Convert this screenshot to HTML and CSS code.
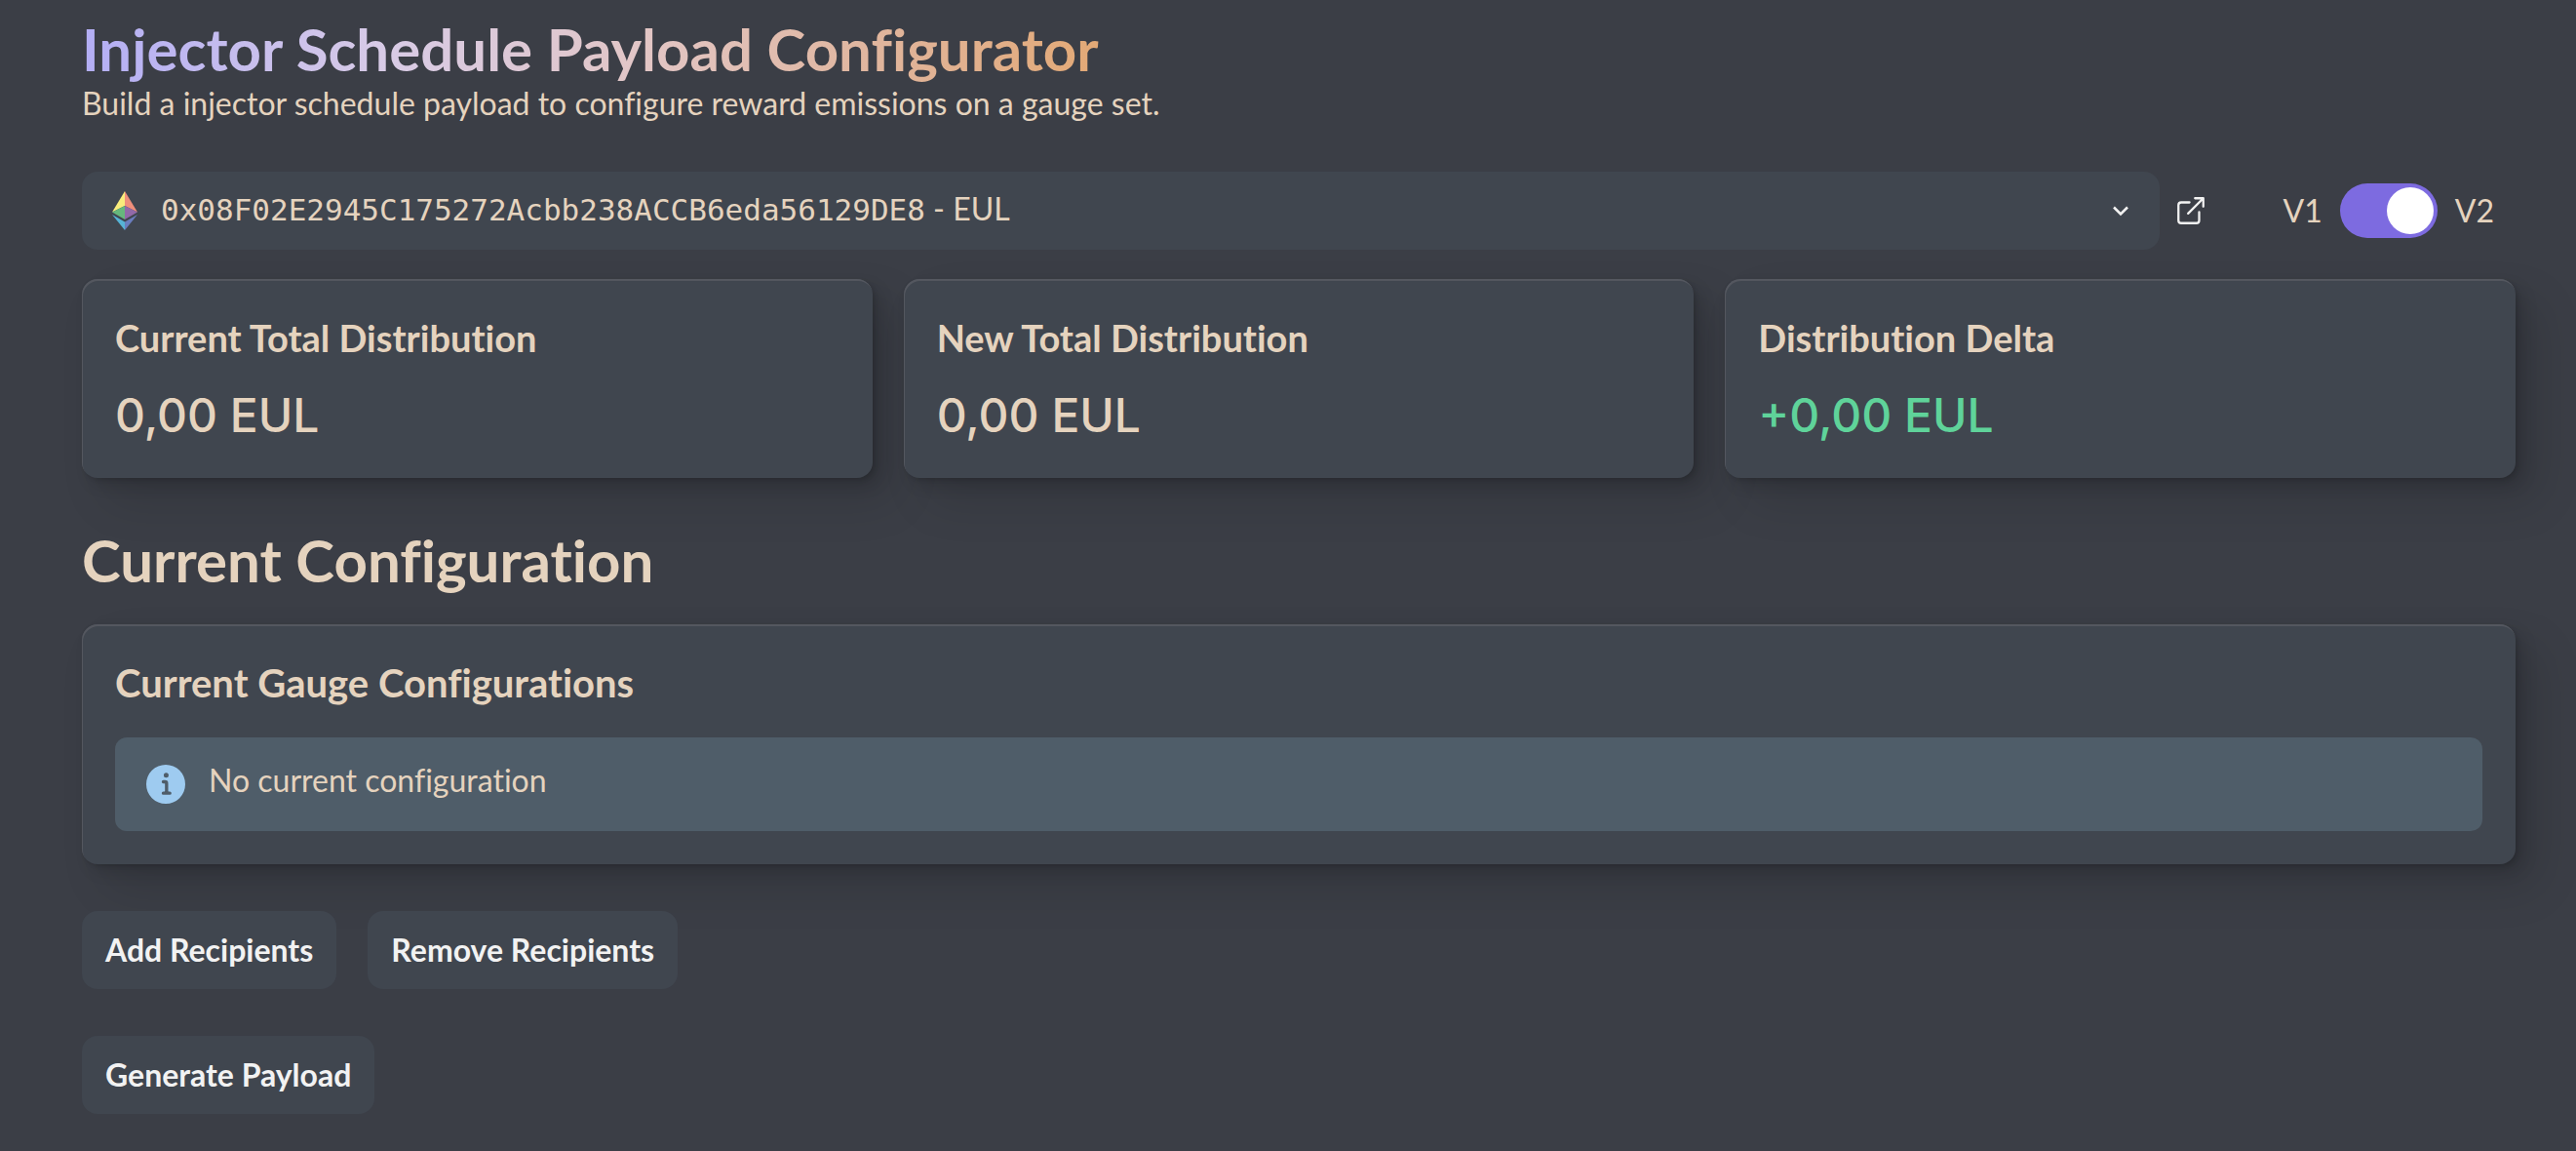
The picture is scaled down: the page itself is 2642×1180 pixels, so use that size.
FILE: index.html
```html
<!DOCTYPE html>
<html lang="en">
<head>
<meta charset="utf-8">
<meta name="viewport" content="width=device-width, initial-scale=1">
<title>Injector Schedule Payload Configurator</title>
<link rel="stylesheet" href="styles.css">
</head>
<body>
<main class="page">
  <header class="page-header">
    <h1 class="heading heading-gradient">Injector Schedule Payload Configurator</h1>
    <p class="subtitle">Build a injector schedule payload to configure reward emissions on a gauge set.</p>
  </header>

  <div class="toolbar">
    <div class="picker">
      <svg class="picker-logo" viewBox="0 0 26 40" aria-hidden="true">
        <path fill="#f9ec7c" d="M13 0 0 21.500 13 15z"/>
        <path fill="#ef8f7b" d="M13 0v15l13 6.500z"/>
        <path fill="#66b87c" d="M0 21.500 13 15v14z"/>
        <path fill="#9169a8" d="M26 21.500 13 15v14z"/>
        <path fill="#56b3d6" d="M0 24l13 7.500V40z"/>
        <path fill="#6a7dbe" d="M26 24l-13 7.500V40z"/>
      </svg>
      <span class="picker-text" aria-hidden="true"><span class="mono">0x08F02E2945C175272Acbb238ACCB6eda56129DE8</span> - EUL</span>
      <svg class="picker-chevron" viewBox="0 0 24 24" aria-hidden="true"><path d="m5 8.500 7 7 7-7"/></svg>
      <select class="picker-select" aria-label="Injector address">
        <option selected>0x08F02E2945C175272Acbb238ACCB6eda56129DE8 - EUL</option>
      </select>
    </div>
    <a class="explorer-link" href="#" aria-label="Open in explorer">
      <svg viewBox="0 0 24 24" aria-hidden="true"><path d="M18 13v6a2 2 0 0 1-2 2H5a2 2 0 0 1-2-2V8a2 2 0 0 1 2-2h6M15 3h6v6M10 14 21 3"/></svg>
    </a>
    <div class="version">
      <label for="version">V1</label>
      <input class="switch" id="version" type="checkbox" role="switch" checked>
      <label for="version">V2</label>
    </div>
  </div>

  <section class="stats">
    <div class="card">
      <h2 class="stat-label">Current Total Distribution</h2>
      <p class="stat-value">0,00 EUL</p>
    </div>
    <div class="card">
      <h2 class="stat-label">New Total Distribution</h2>
      <p class="stat-value">0,00 EUL</p>
    </div>
    <div class="card">
      <h2 class="stat-label">Distribution Delta</h2>
      <p class="stat-value positive">+0,00 EUL</p>
    </div>
  </section>

  <section class="configuration">
    <h2 class="heading">Current Configuration</h2>
    <div class="card">
      <h3 class="card-title">Current Gauge Configurations</h3>
      <div class="alert" role="status">
        <svg class="alert-icon" viewBox="0 0 24 24" aria-hidden="true"><path d="M12 0a12 12 0 1 0 0 24 12 12 0 0 0 0-24zm.250 5a1.500 1.500 0 1 1 0 3 1.500 1.500 0 0 1 0-3zm2.250 13.500h-4a1 1 0 0 1 0-2h.750a.250.250 0 0 0 .250-.250v-4.500a.250.250 0 0 0-.250-.250h-.750a1 1 0 0 1 0-2h1a2 2 0 0 1 2 2v4.750a.250.250 0 0 0 .250.250h.750a1 1 0 0 1 0 2z"/></svg>
        <span>No current configuration</span>
      </div>
    </div>
  </section>

  <div class="actions">
    <button class="button" type="button">Add Recipients</button>
    <button class="button" type="button">Remove Recipients</button>
  </div>
  <div class="actions">
    <button class="button" type="button">Generate Payload</button>
  </div>
</main>
</body>
</html>
```
FILE: styles.css
```css
:root {
  --page: #3b3e46;
  --surface: #40464f;
  --sand: #e5d3be;
  --light: #f2f2f2;
  --green: #5fd39a;
  --purple: #7d6be0;
}

* {
  box-sizing: border-box;
  margin: 0;
}

body {
  background: var(--page);
  color: var(--sand);
  font: 400 32px/40px Lato, "Liberation Sans", sans-serif;
  font-variant-ligatures: none;
}

.page {
  padding: 14px 62px 38px 84px;
}

.heading {
  width: fit-content;
  font-size: 60px;
  font-weight: 700;
  line-height: 72px;
}

.heading-gradient {
  background: linear-gradient(90deg, #b3aef5 0%, #d8cbe6 30%, #e2c6c6 55%, #e0b49a 80%, #e3a976 100%);
  background-clip: text;
  -webkit-background-clip: text;
  color: transparent;
}

.toolbar {
  display: flex;
  align-items: center;
  margin-top: 50px;
}

.picker {
  position: relative;
  display: flex;
  flex: 1;
  align-items: center;
  gap: 24px;
  height: 80px;
  padding: 0 28px 0 31px;
  border-radius: 16px;
  background: var(--surface);
}

.picker-logo {
  width: 26px;
  height: 40px;
}

.picker-text {
  flex: 1;
  padding-bottom: 4px;
}

.mono {
  font-family: "DejaVu Sans Mono", "Liberation Mono", monospace;
  font-size: 31px;
  line-height: 32px;
}

.picker-chevron {
  width: 24px;
  height: 24px;
  fill: none;
  stroke: var(--light);
  stroke-width: 2.5;
}

.picker-select {
  position: absolute;
  inset: 0;
  width: 100%;
  height: 100%;
  opacity: 0;
  cursor: pointer;
}

.explorer-link {
  margin-left: 15px;
}

.explorer-link svg {
  display: block;
  width: 34px;
  height: 34px;
  fill: none;
  stroke: var(--light);
  stroke-width: 1.6;
  stroke-linecap: round;
  stroke-linejoin: round;
}

.version {
  display: flex;
  align-items: center;
  gap: 18px;
  padding: 0 22px 0 78px;
}

.switch {
  appearance: none;
  width: 100px;
  height: 56px;
  padding: 4px;
  border-radius: 28px;
  background: #6a6d75;
  cursor: pointer;
}

.switch::before {
  content: "";
  display: block;
  width: 48px;
  height: 48px;
  border-radius: 50%;
  background: #fff;
}

.switch:checked {
  background: var(--purple);
}

.switch:checked::before {
  margin-left: auto;
}

.stats {
  display: grid;
  grid-template-columns: repeat(3, 1fr);
  gap: 32px;
  margin-top: 30px;
}

.card {
  padding: 36px 34px 34px;
  border-radius: 16px;
  background: var(--surface);
  box-shadow:
    inset 1px 2px 0 #54575f,
    2px 2px 4px rgba(0, 0, 0, 0.12),
    8px 8px 16px rgba(0, 0, 0, 0.12),
    24px 24px 48px rgba(0, 0, 0, 0.12);
}

.stat-label {
  font-size: 38px;
  font-weight: 700;
  line-height: 48px;
}

.stat-value {
  margin: 28px 0 2px;
  font: 500 48px/56px Inter, "Liberation Sans", sans-serif;
}

.positive {
  color: var(--green);
}

.configuration {
  display: grid;
  gap: 30px;
  margin-top: 48px;
}

.card-title {
  font-size: 40px;
  font-weight: 700;
  line-height: 48px;
}

.alert {
  display: flex;
  align-items: flex-start;
  gap: 24px;
  min-height: 96px;
  margin-top: 32px;
  padding: 24px 32px;
  border-radius: 12px;
  background: #4f5d69;
}

.alert-icon {
  width: 40px;
  height: 40px;
  margin-top: 4px;
  fill: #9ecbf0;
}

.actions {
  display: flex;
  gap: 32px;
  margin-top: 48px;
}

.button {
  height: 80px;
  padding: 0 24px;
  border: 0;
  border-radius: 16px;
  background: var(--surface);
  color: var(--light);
  font: inherit;
  font-weight: 700;
  cursor: pointer;
}
```
